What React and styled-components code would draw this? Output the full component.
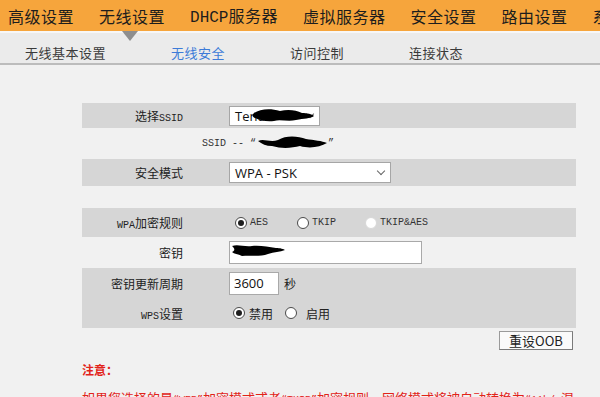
import React from "react";
import styled, { createGlobalStyle } from "styled-components";

const GlobalStyle = createGlobalStyle`
  html, body {
    margin: 0;
    padding: 0;
    background: #f1f1f1;
  }
  body {
    width: 600px;
    height: 397px;
    overflow: hidden;
    font-family: "Noto Sans CJK SC", "Noto Sans", sans-serif;
  }
`;

const mainMenu = ["高级设置", "无线设置", "DHCP服务器", "虚拟服务器", "安全设置", "路由设置", "系统工具"];
const subMenu = ["无线基本设置", "无线安全", "访问控制", "连接状态"];

// splits latin letters out so they can use the narrow mono face like the router page
const mixText = (text) =>
  text.split(/([A-Za-z&/0-9“”]+)/).map((part, i) =>
    /[A-Za-z“”]/.test(part) ? <Mono key={i}>{part}</Mono> : part
  );

function Blob({ w, h, d }) {
  return (
    <BlobSvg width={w} height={h} viewBox={`0 0 ${w} ${h}`}>
      <path d={d} fill="#000" />
    </BlobSvg>
  );
}

export default function App() {
  return (
    <>
      <GlobalStyle />
      <TopNav>
        {mainMenu.map((item) => (
          <TopItem key={item}>
            {item.startsWith("DHCP") ? (
              <>
                <NavMono>DHCP</NavMono>服务器
              </>
            ) : (
              item
            )}
          </TopItem>
        ))}
      </TopNav>
      <SubNav>
        <Pointer />
        {subMenu.map((item) => (
          <SubItem key={item} active={item === "无线安全"}>
            {item}
          </SubItem>
        ))}
      </SubNav>

      <Content>
        <Row h={25} shade>
          <Label>{mixText("选择SSID")}</Label>
          <Cell>
            <Select w={91} h={20}>
              Tend
              <Chevron />
              <Blob
                w={86}
                h={16}
                d="M24 6 C30 2, 40 1, 50 4 C58 2, 66 3, 72 6 C77 6, 82 7, 84 9 C80 12, 74 11, 66 13 C58 15, 50 12, 44 14 C36 15, 30 13, 25 11 C22 10, 22 8, 24 6Z"
              />
            </Select>
          </Cell>
        </Row>
        <InfoLine>
          <Mono>SSID -- “</Mono>
          <BlobSlot>
            <Blob
              w={72}
              h={16}
              d="M2 7 C8 4, 14 9, 22 6 C30 1, 42 2, 50 5 C58 6, 66 7, 71 9 C64 13, 54 15, 44 12 C36 14, 26 15, 16 12 C10 12, 6 10, 2 7Z"
            />
          </BlobSlot>
          <Mono>”</Mono>
        </InfoLine>
        <Row h={27} shade>
          <Label>安全模式</Label>
          <Cell>
            <Select w={162} h={21}>
              WPA - PSK
              <Chevron />
            </Select>
          </Cell>
        </Row>

        <Spacer />

        <Row h={29} shade>
          <Label>{mixText("WPA加密规则")}</Label>
          <Cell pad={6}>
            <RadioGroup gap={29}>
              <Option>
                <Radio checked />
                <OptMono>AES</OptMono>
              </Option>
              <Option>
                <Radio />
                <OptMono>TKIP</OptMono>
              </Option>
              <Option>
                <Radio faint />
                <OptMono>TKIP&amp;AES</OptMono>
              </Option>
            </RadioGroup>
          </Cell>
        </Row>
        <Row h={31}>
          <Label>密钥</Label>
          <Cell>
            <TextBox w={193}>
              <Blob
                w={56}
                h={16}
                d="M2 4 C8 2, 14 5, 22 4 C30 3, 38 5, 46 6 C50 6, 54 7, 55 8 C50 10, 44 10, 38 12 C30 15, 20 13, 12 14 C8 12, 4 12, 2 10 C6 8, 4 6, 2 4Z"
              />
            </TextBox>
          </Cell>
        </Row>
        <Row h={30} shade>
          <Label>密钥更新周期</Label>
          <Cell>
            <TextBox w={50}>3600</TextBox>
            <Unit>秒</Unit>
          </Cell>
        </Row>
        <Row h={30} shade>
          <Label>{mixText("WPS设置")}</Label>
          <Cell pad={4}>
            <RadioGroup gap={12}>
              <Option>
                <Radio checked />
                <OptText>禁用</OptText>
              </Option>
              <Option>
                <Radio />
                <OptText wide>启用</OptText>
              </Option>
            </RadioGroup>
          </Cell>
        </Row>

        <ButtonBar>
          <ResetButton>重设OOB</ResetButton>
        </ButtonBar>

        <NoteTitle>注意：</NoteTitle>
        <NoteText>
          {mixText("如果您选择的是“WEP”加密模式或者“TKIP”加密规则，网络模式将被自动转换为“11b/g混合模式”。")}
        </NoteText>
      </Content>
    </>
  );
}

const TopNav = styled.nav`
  display: flex;
  align-items: center;
  gap: 25px;
  height: 31px;
  padding: 1px 0 0 8px;
  box-sizing: border-box;
  background: #f6a53c;
  white-space: nowrap;
  overflow: hidden;
`;

const TopItem = styled.span`
  font-size: 16px;
  line-height: 1;
  letter-spacing: 0.5px;
  color: #1d1d1d;
  flex-shrink: 0;
`;

const NavMono = styled.span`
  font-family: "Liberation Mono", monospace;
  font-size: 16px;
  letter-spacing: 0;
`;

const SubNav = styled.div`
  position: relative;
  display: flex;
  align-items: center;
  gap: 65px;
  height: 34px;
  padding: 9px 0 0 25px;
  box-sizing: border-box;
  background: #ebebeb;
  border-top: 2px solid #f7f7f7;
  border-bottom: 2px solid #bcbcbc;
`;

const Pointer = styled.span`
  position: absolute;
  left: 122px;
  top: -2px;
  width: 0;
  height: 0;
  border-left: 8px solid transparent;
  border-right: 8px solid transparent;
  border-top: 10px solid #8e8e8e;
`;

const SubItem = styled.span`
  font-size: 13px;
  letter-spacing: 0.5px;
  line-height: 1;
  color: ${(p) => (p.active ? "#3d7bd8" : "#3a3a3a")};
`;

const Content = styled.main`
  padding: 38px 24px 0 82px;
`;

const Row = styled.div`
  display: grid;
  grid-template-columns: 101px 1fr;
  column-gap: 46px;
  align-items: center;
  height: ${(p) => p.h}px;
  background: ${(p) => (p.shade ? "#d6d6d6" : "transparent")};
`;

const Label = styled.div`
  text-align: right;
  font-size: 12px;
  color: #222;
  white-space: nowrap;
`;

const Mono = styled.span`
  font-family: "Liberation Mono", monospace;
  font-size: 10px;
  color: inherit;
`;

const Cell = styled.div`
  display: flex;
  align-items: center;
  padding-left: ${(p) => p.pad || 0}px;
`;

const Select = styled.div`
  position: relative;
  display: flex;
  align-items: center;
  width: ${(p) => p.w}px;
  height: ${(p) => p.h}px;
  box-sizing: border-box;
  padding: 0 5px;
  border: 1px solid #a6a6a6;
  background: #fff;
  font-family: "Open Sans", "Noto Sans", sans-serif;
  font-size: 13px;
  color: #111;
`;

const Chevron = styled.span`
  position: absolute;
  right: 6px;
  top: 50%;
  width: 5px;
  height: 5px;
  margin-top: -5px;
  border-right: 1px solid #666;
  border-bottom: 1px solid #666;
  transform: rotate(45deg);
`;

const BlobSvg = styled.svg`
  position: absolute;
  left: 0;
  top: 0;
`;

const InfoLine = styled.div`
  display: flex;
  align-items: center;
  height: 31px;
  padding-left: 120px;
  color: #333;
`;

const BlobSlot = styled.span`
  position: relative;
  display: inline-block;
  width: 72px;
  height: 16px;
  margin-top: -3px;
`;

const Spacer = styled.div`
  height: 22px;
`;

const RadioGroup = styled.div`
  display: flex;
  align-items: center;
  gap: ${(p) => p.gap}px;
`;

const Option = styled.label`
  display: flex;
  align-items: center;
  gap: 3px;
`;

const Radio = styled.span`
  display: inline-flex;
  align-items: center;
  justify-content: center;
  width: 12px;
  height: 12px;
  box-sizing: border-box;
  border-radius: 50%;
  border: 1px solid ${(p) => (p.faint ? "#d8d8d8" : "#4a4a4a")};
  background: #fff;
  &::after {
    content: "";
    display: ${(p) => (p.checked ? "block" : "none")};
    width: 6px;
    height: 6px;
    border-radius: 50%;
    background: #1e1e1e;
  }
`;

const OptMono = styled.span`
  font-family: "Liberation Mono", monospace;
  font-size: 10px;
  color: #333;
`;

const OptText = styled.span`
  font-size: 12px;
  color: #222;
  margin-left: ${(p) => (p.wide ? 6 : 1)}px;
`;

const TextBox = styled.div`
  position: relative;
  display: flex;
  align-items: center;
  width: ${(p) => p.w}px;
  height: 23px;
  box-sizing: border-box;
  padding: 0 4px;
  border: 1px solid #a9a9a9;
  background: #fff;
  font-family: "Open Sans", "Noto Sans", sans-serif;
  font-size: 13px;
  color: #111;
`;

const Unit = styled.span`
  margin-left: 5px;
  font-size: 12px;
  color: #222;
`;

const ButtonBar = styled.div`
  display: flex;
  justify-content: flex-end;
  padding: 3px 3px 0 0;
`;

const ResetButton = styled.button`
  width: 74px;
  height: 19px;
  padding: 0;
  border: 1px solid #9a9a9a;
  border-right-color: #7a7a7a;
  border-bottom-color: #7a7a7a;
  background: #fafafa;
  font-family: "Noto Sans CJK SC", "Noto Sans", sans-serif;
  font-size: 13px;
  line-height: 1;
  color: #222;
`;

const NoteTitle = styled.div`
  margin-top: 12px;
  font-size: 12px;
  font-weight: bold;
  color: #e2231a;
  line-height: 16px;
`;

const NoteText = styled.div`
  margin-top: 11px;
  font-size: 13px;
  line-height: 17px;
  color: #e2231a;
`;
